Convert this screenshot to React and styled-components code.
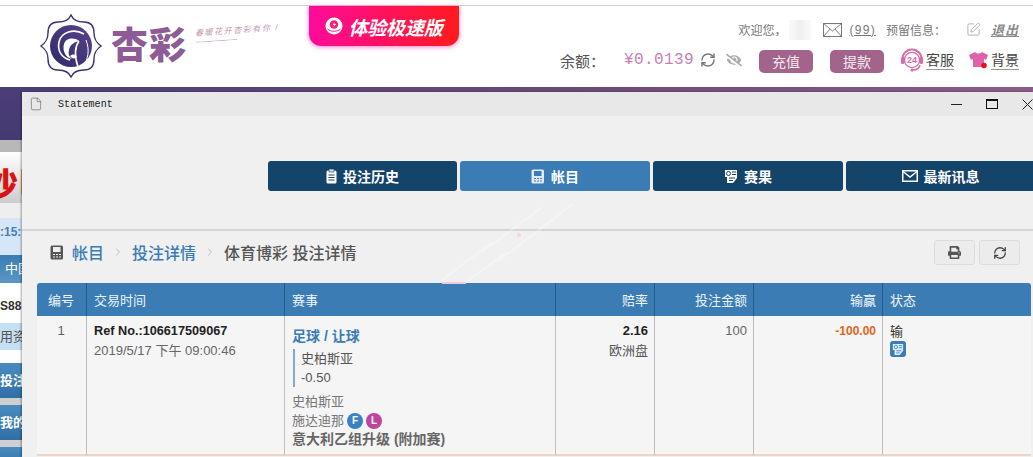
import React from 'react';
import styled, { createGlobalStyle } from 'styled-components';
import { FaPrint, FaEyeSlash } from 'react-icons/fa';
import { RefreshCw, SquarePen, File, ChevronRight } from 'lucide-react';

const GlobalStyle = createGlobalStyle`
  html, body { margin: 0; padding: 0; background: #fff; }
  body { font-family: "Liberation Sans", "Noto Sans CJK SC", sans-serif; }
  * { box-sizing: border-box; }
`;

const Page = styled.div`
  width: 1033px;
  height: 457px;
  overflow: hidden;
  display: flex;
  flex-direction: column;
`;

const TopStrip = styled.div`
  height: 6px;
  flex: none;
  border-bottom: 1px solid #cfcfcf;
`;

const Header = styled.header`
  height: 81px;
  flex: none;
  display: flex;
  align-items: flex-start;
  padding: 0 14px 0 40px;
`;

const Logo = styled.div`
  width: 240px;
  height: 81px;
  display: flex;
  align-items: flex-start;
  flex: none;
`;

const LogoName = styled.span`
  margin: 18px 0 0 9px;
  font-size: 37px;
  line-height: 46px;
  font-weight: 900;
  color: #8d5c96;
  letter-spacing: 1px;
`;

const Tagline = styled.div`
  margin: 19px 0 0 8px;
  width: 84px;
  font-size: 8px;
  line-height: 11px;
  white-space: nowrap;
  color: #c795ae;
  font-style: italic;
  transform: rotate(-4deg);
  letter-spacing: 1.6px;
`;

const TaglineStroke = styled.div`
  width: 42px;
  height: 3px;
  margin-top: 1px;
  border-bottom: 1px solid #cfb3c6;
  border-bottom-left-radius: 30px;
`;

const Promo = styled.div`
  width: 150px;
  height: 40px;
  margin-left: 29px;
  flex: none;
  display: flex;
  align-items: center;
  justify-content: center;
  gap: 5px;
  color: #fff;
  font-size: 19px;
  font-weight: 700;
  border-radius: 0 0 12px 12px;
  background: linear-gradient(90deg, #ff0a9c, #ff1a1e);
  box-shadow: 0 1px 5px rgba(255, 20, 160, 0.55);
  font-style: italic;
  letter-spacing: -0.2px;
`;

const UserPanel = styled.div`
  margin-left: auto;
  display: flex;
  flex-direction: column;
  align-items: flex-end;
`;

const InfoRow = styled.div`
  height: 17px;
  margin-top: 15px;
  display: flex;
  align-items: center;
  font-size: 12px;
  color: #777;
`;

const NameMask = styled.span`
  width: 22px;
  height: 20px;
  margin: 0 12px 0 3px;
  background: linear-gradient(90deg, #fafafa, #eee, #fafafa);
`;

const MsgCount = styled.span`
  margin: 0 10px 0 7px;
  text-decoration: underline;
  letter-spacing: 1.3px;
`;

const Logout = styled.span`
  margin-left: 10px;
  font-weight: 700;
  font-style: italic;
  text-decoration: underline;
  color: #8a8a8a;
  letter-spacing: 1px;
  font-size: 13px;
`;

const BalanceRow = styled.div`
  height: 24px;
  margin-top: 10px;
  display: flex;
  align-items: center;
`;

const BalanceLabel = styled.span`
  font-size: 15px;
  color: #555;
  margin-right: 19px;
`;

const BalanceValue = styled.span`
  font-family: "Liberation Mono", monospace;
  font-size: 16px;
  color: #c77fb5;
  letter-spacing: 0.4px;
  margin-right: 6px;
`;

const FundButton = styled.button`
  width: 54px;
  height: 23px;
  padding: 0;
  border: 0;
  border-radius: 5px;
  background: #a3648c;
  color: #f4e8f0;
  font: 14px "Liberation Sans", "Noto Sans CJK SC", sans-serif;
  margin: 2px 0 0 ${(p) => p.$gap}px;
`;

const ToolLink = styled.span`
  display: inline-flex;
  align-items: center;
  margin-left: ${(p) => p.$gap}px;
  gap: 2px;
`;

const ToolLabel = styled.span`
  font-size: 14px;
  color: #444;
  line-height: 18px;
  border-bottom: 1px solid #999;
`;

const NavBar = styled.div`
  height: 5px;
  flex: none;
  background: linear-gradient(90deg, #4a3d78, #6a4a78 55%, #8c5c86);
`;

const Main = styled.div`
  flex: 1;
  display: flex;
  min-height: 0;
`;

const Sidebar = styled.aside`
  width: 22px;
  flex: none;
  overflow: hidden;
  display: flex;
  flex-direction: column;
`;

const SideRow = styled.div`
  height: ${(p) => p.$h}px;
  flex: none;
  background: ${(p) => p.$bg};
  color: ${(p) => p.$color || '#fff'};
  font-size: ${(p) => p.$size || 13}px;
  font-weight: ${(p) => (p.$bold ? 700 : 400)};
  line-height: ${(p) => p.$line || p.$h}px;
  padding-left: ${(p) => p.$pad || 0}px;
  white-space: nowrap;
  overflow: hidden;
`;

const RedTitle = styled.span`
  display: inline-block;
  margin-left: -15px;
  font-size: 33px;
  font-weight: 900;
  color: #d81410;
  line-height: 66px;
`;

const Window = styled.section`
  position: relative;
  width: 1011px;
  flex: none;
  overflow: hidden;
  background: #f0f0f0;
  box-shadow: -1px 0 2px rgba(0, 0, 0, 0.35);
`;

const TitleBar = styled.div`
  height: 24px;
  display: flex;
  align-items: center;
  padding-left: 7px;
  background: #e8e8e8;
  color: #222;
`;

const TitleText = styled.span`
  margin-left: 15px;
  font-family: "Liberation Mono", monospace;
  font-size: 10px;
  letter-spacing: 0.1px;
`;

const WinControls = styled.div`
  margin-left: auto;
  display: flex;
  align-items: center;
  gap: 24px;
`;

const MinIcon = styled.span`
  width: 11px;
  height: 1px;
  background: #222;
`;

const MaxIcon = styled.span`
  width: 12px;
  height: 10px;
  border: 1px solid #111;
  border-top-width: 2px;
`;

const TabArea = styled.div`
  height: 115px;
  padding: 45px 0 0 246px;
  display: flex;
  align-items: flex-start;
  gap: 3px;
  border-bottom: 2px solid #d4d4d4;
`;

const Tab = styled.div`
  width: ${(p) => p.$w}px;
  height: 30px;
  flex: none;
  display: flex;
  align-items: center;
  justify-content: center;
  gap: 6px;
  border-radius: 3px;
  background: ${(p) => (p.$active ? '#3a7cb3' : '#15446b')};
  color: #fff;
  font-size: 14px;
  font-weight: 700;
`;

const Toolbar = styled.div`
  height: 52px;
  display: flex;
  align-items: center;
  padding: 0 13px 10px 28px;
`;

const CrumbLink = styled.span`
  font-size: 16px;
  font-weight: 500;
  color: #3a7cb3;
  margin-left: ${(p) => p.$gap || 0}px;
`;

const CrumbCurrent = styled.span`
  font-size: 16px;
  font-weight: 500;
  color: #555;
`;

const CrumbArrow = styled(ChevronRight)`
  margin: 0 8px;
  color: #aaa;
`;

const ToolButtons = styled.div`
  margin-left: auto;
  margin-top: 1px;
  display: flex;
  gap: 4px;
`;

const IconButton = styled.button`
  width: 41px;
  height: 25px;
  padding: 0;
  display: flex;
  align-items: center;
  justify-content: center;
  background: #ececec;
  border: 1px solid #dcdcdc;
  border-radius: 3px;
  color: #444;
`;

const Table = styled.table`
  margin-left: 15px;
  width: 994px;
  table-layout: fixed;
  border-collapse: separate;
  border-spacing: 0;
  font-size: 13px;
  color: #666;
`;

const Th = styled.th`
  height: 33px;
  padding: 0 ${(p) => (p.$align === 'right' ? 6 : 8)}px 0 ${(p) => (p.$align === 'right' ? 0 : 7)}px;
  background: #3a7cb3;
  color: #eef5fb;
  font-size: 13px;
  font-weight: 400;
  text-align: ${(p) => p.$align || 'left'};
  border-right: 1px solid #1f5c8c;
  &:first-child { border-top-left-radius: 3px; }
  &:last-child { border-top-right-radius: 3px; border-right: 0; }
`;

const Td = styled.td`
  height: 140px;
  vertical-align: top;
  padding: 6px ${(p) => (p.$align === 'right' ? 6 : 8)}px 0 ${(p) => (p.$align === 'right' ? 0 : 7)}px;
  line-height: 18px;
  background: #f5f5f5;
  text-align: ${(p) => p.$align || 'left'};
  border-right: 1px solid #bdbdbd;
  border-bottom: 2px solid #f0d6c2;
  &:last-child { border-right: 0; }
`;

const MatchCell = styled(Td)`
  padding-top: 11px;
`;

const RefNo = styled.div`
  font-size: 12.7px;
  font-weight: 700;
  color: #222;
`;

const DateLine = styled.div`
  margin-top: 2px;
  color: #666;
`;

const SportLine = styled.div`
  font-size: 14px;
  font-weight: 700;
  color: #3a7cb3;
`;

const BetBlock = styled.div`
  margin: 4px 0 5px 1px;
  padding-left: 6px;
  border-left: 2px solid #86a9c9;
  line-height: 19px;
  color: #555;
`;

const TeamLine = styled.div`
  display: flex;
  align-items: center;
  gap: 3px;
  line-height: 19px;
  color: #777;
`;

const Badge = styled.span`
  width: 16px;
  height: 16px;
  border-radius: 50%;
  display: inline-flex;
  align-items: center;
  justify-content: center;
  background: ${(p) => p.$bg};
  color: #fff;
  font-size: 10px;
  font-weight: 700;
`;

const LeagueLine = styled.div`
  font-size: 14px;
  line-height: 19px;
  font-weight: 700;
  color: #666;
`;

const OddsValue = styled.div`
  font-weight: 700;
  color: #222;
`;

const OddsType = styled.div`
  margin-top: 2px;
  color: #555;
`;

const Loss = styled.span`
  font-size: 12px;
  font-weight: 700;
  color: #e0661a;
`;

const StatusText = styled.div`
  color: #333;
  margin-top: 1px;
`;

const ResultButton = styled.span`
  width: 16px;
  height: 16px;
  display: flex;
  align-items: center;
  justify-content: center;
  border-radius: 3px;
  background: #3a7cb3;
`;

const Watermark = styled.svg`
  position: absolute;
  left: 400px;
  top: 100px;
  pointer-events: none;
`;

const Emblem = () => (
  <svg width="62" height="64" viewBox="0 0 62 64" style={{ marginTop: 8, flex: 'none' }}>
    <defs>
      <linearGradient id="emb" x1="0" y1="1" x2="1" y2="0">
        <stop offset="0" stopColor="#2c2a6b" />
        <stop offset="1" stopColor="#5c4289" />
      </linearGradient>
    </defs>
    <path
      d="M31 1 C33 6 38 8 44 8 C51 8 54 12 54 19 C54 26 57 29 61 32 C57 35 54 38 54 45 C54 52 51 56 44 56 C38 56 33 58 31 63 C29 58 24 56 18 56 C11 56 8 52 8 45 C8 38 5 35 1 32 C5 29 8 26 8 19 C8 12 11 8 18 8 C24 8 29 6 31 1 Z"
      fill="#fff"
      stroke="#3d3270"
      strokeWidth="1.4"
    />
    <circle cx="31" cy="32" r="21" fill="url(#emb)" />
    <path d="M44 20 C34 14 21 18 19 28 C17 37 22 44 30 46" fill="none" stroke="#fff" strokeWidth="1.6" />
    <path d="M24 30 C26 24 34 23 39 27 C35 28 30 30 29 36 C28 40 29 43 32 45 C26 44 22 37 24 30 Z" fill="#fff" />
    <path d="M39 27 C34 34 35 44 38 53" fill="none" stroke="#fff" strokeWidth="1.6" />
    <path d="M46 26 C50 36 48 46 43 52" fill="none" stroke="#fff" strokeWidth="1" />
    <path d="M30 42 C33 40 35 40 37 43 C35 45 32 45 30 42 Z" fill="#fff" />
  </svg>
);

const SpeedBall = () => (
  <svg width="18" height="18" viewBox="0 0 18 18">
    <circle cx="9" cy="9" r="8.5" fill="#fff" />
    <circle cx="9" cy="7.5" r="4.2" fill="#ff1a7c" />
    <path d="M10 4.8 L7.6 8 H9.4 L8.4 10.4 L11 7 H9.2 Z" fill="#fff" />
    <path d="M2.5 12 C6 15 12 15 15.5 12" fill="none" stroke="#ff1a7c" strokeWidth="1" />
  </svg>
);

const Envelope = () => (
  <svg width="19" height="14" viewBox="0 0 19 14">
    <rect x="0.5" y="0.5" width="18" height="13" fill="none" stroke="#777" strokeWidth="1" />
    <path d="M0.5 0.5 L9.5 8 L18.5 0.5 M0.5 13.5 L7 6 M18.5 13.5 L12 6" fill="none" stroke="#777" strokeWidth="0.9" />
  </svg>
);

const Headset = () => (
  <svg width="24" height="26" viewBox="0 0 24 26">
    <path d="M3 15 A9.5 9.5 0 1 1 21 15" fill="none" stroke="#d86aa8" strokeWidth="2" />
    <circle cx="12" cy="13" r="7.6" fill="#fff" stroke="#d86aa8" strokeWidth="1.4" />
    <rect x="1" y="10" width="3.4" height="7" rx="1.6" fill="#d86aa8" />
    <rect x="19.6" y="10" width="3.4" height="7" rx="1.6" fill="#d86aa8" />
    <path d="M20 18 C19 22 16 23 13 23" fill="none" stroke="#d86aa8" strokeWidth="1.4" />
    <circle cx="12" cy="23" r="1.6" fill="#d86aa8" />
    <text x="12" y="16.4" textAnchor="middle" fontSize="9" fontWeight="700" fontFamily="Liberation Sans" fill="#d86aa8">24</text>
  </svg>
);

const Shirt = () => (
  <svg width="20" height="20" viewBox="0 0 20 20">
    <path d="M6 2 C8 4 11 4 13 2 L19 5 L17 10 L15 9 L15 17 L4 17 L4 9 L2 10 L0 5 Z" fill="#e062ab" />
    <circle cx="15" cy="15.5" r="2.8" fill="#e8101a" />
  </svg>
);

const ClipIcon = ({ color = '#fff' }) => (
  <svg width="11" height="15" viewBox="0 0 11 15">
    <rect x="0.5" y="1.5" width="10" height="13" rx="1.5" fill={color} />
    <rect x="3" y="0" width="5" height="3" fill="#cfd9e2" stroke="#15446b" strokeWidth="0.6" />
    <path d="M2.5 6 H8.5 M2.5 8.5 H8.5 M2.5 11 H8.5" stroke="#15446b" strokeWidth="1" />
  </svg>
);

const LedgerIcon = ({ dark }) => (
  <svg width="14" height="15" viewBox="0 0 14 15">
    <rect x="0.5" y="0.5" width="12.5" height="14" rx="1.5" fill={dark ? '#555' : '#dfeaf4'} />
    <rect x="3" y="2" width="7.5" height="5" fill={dark ? '#eee' : '#3a7cb3'} />
    <path d="M3 9.5 H5 M6 9.5 H8 M9 9.5 H11 M3 12 H5 M6 12 H8 M9 12 H11" stroke={dark ? '#eee' : '#3a7cb3'} strokeWidth="1.2" />
  </svg>
);

const ResultIcon = ({ stroke = '#15446b', fill = '#fff', size = 14 }) => (
  <svg width={size} height={size + 1} viewBox="0 0 14 15">
    <path d="M1 1 H13 V9 L9 14 H3 V8 H1 Z" fill={fill} />
    <circle cx="4.5" cy="4.5" r="2" fill="none" stroke={stroke} strokeWidth="1" />
    <path d="M8 3 H12 M8 5.5 H12 M5 9 H11 M5 11.5 H9" stroke={stroke} strokeWidth="1" />
  </svg>
);

const columns = [50, 198, 271, 99, 99, 129, 148];

export default function App() {
  return (
    <Page>
      <GlobalStyle />
      <TopStrip />
      <Header>
        <Logo>
          <Emblem />
          <LogoName>杏彩</LogoName>
          <Tagline>
            春暖花开杏彩有你 /
            <TaglineStroke />
          </Tagline>
        </Logo>
        <Promo>
          <SpeedBall />
          体验极速版
        </Promo>
        <UserPanel>
          <InfoRow>
            欢迎您，
            <NameMask />
            <Envelope />
            <MsgCount>(99)</MsgCount>
            预留信息：
            <SquarePen size={15} strokeWidth={1.4} color="#aaa" style={{ marginLeft: 20 }} />
            <Logout>退出</Logout>
          </InfoRow>
          <BalanceRow>
            <BalanceLabel>余额：</BalanceLabel>
            <BalanceValue>¥0.0139</BalanceValue>
            <RefreshCw size={16} strokeWidth={2.2} color="#777" />
            <FaEyeSlash size={16} color="#aaa" style={{ marginLeft: 10 }} />
            <FundButton $gap={17}>充值</FundButton>
            <FundButton $gap={17}>提款</FundButton>
            <ToolLink $gap={16}>
              <Headset />
              <ToolLabel>客服</ToolLabel>
            </ToolLink>
            <ToolLink $gap={15}>
              <Shirt />
              <ToolLabel>背景</ToolLabel>
            </ToolLink>
          </BalanceRow>
        </UserPanel>
      </Header>
      <NavBar />
      <Main>
        <Sidebar>
          <SideRow $h={48} $bg="linear-gradient(180deg, #4a3d78, #443a70)" />
          <SideRow $h={12} $bg="#b8b8b8" />
          <SideRow $h={51} $bg="linear-gradient(180deg, #fff, #ccc)">
            <RedTitle>沙巴</RedTitle>
          </SideRow>
          <SideRow $h={15} $bg="#eeeeee" />
          <SideRow $h={37} $bg="#d6e6f8" $color="#4a7fb0" $bold $size={12} $line={29}>:15:</SideRow>
          <SideRow $h={28} $bg="linear-gradient(180deg, #3a7cb3, #5b97c6)" $pad={5}>中国</SideRow>
          <SideRow $h={40} $bg="#fff" $color="#333" $bold $size={12} $line={46}>S88</SideRow>
          <SideRow $h={27} $bg="#c5dff3" $color="#555" $size={13}>用资</SideRow>
          <SideRow $h={13} $bg="#fff" />
          <SideRow $h={35} $bg="linear-gradient(180deg, #4a8cc0, #2f6fa5)" $bold>投注</SideRow>
          <SideRow $h={7} $bg="#cfcfcf" />
          <SideRow $h={35} $bg="linear-gradient(180deg, #4a8cc0, #2f6fa5)" $bold>我的</SideRow>
          <SideRow $h={7} $bg="#cfcfcf" />
          <SideRow $h={20} $bg="linear-gradient(180deg, #4a8cc0, #2f6fa5)" />
        </Sidebar>
        <Window>
          <TitleBar>
            <File size={14} strokeWidth={1} color="#555" />
            <TitleText>Statement</TitleText>
            <WinControls>
              <MinIcon />
              <MaxIcon />
              <svg width="11" height="11" viewBox="0 0 11 11">
                <path d="M0.5 0.5 L10.5 10.5 M10.5 0.5 L0.5 10.5" stroke="#222" strokeWidth="1" />
              </svg>
            </WinControls>
          </TitleBar>
          <TabArea>
            <Tab $w={189}><ClipIcon />投注历史</Tab>
            <Tab $w={190} $active><LedgerIcon />帐目</Tab>
            <Tab $w={190}><ResultIcon />赛果</Tab>
            <Tab $w={189}>
              <svg width="16" height="12" viewBox="0 0 16 12">
                <rect x="0.75" y="0.75" width="14.5" height="10.5" fill="none" stroke="#fff" strokeWidth="1.5" />
                <path d="M1 1.5 L8 7 L15 1.5" fill="none" stroke="#fff" strokeWidth="1.4" />
              </svg>
              最新讯息
            </Tab>
          </TabArea>
          <Toolbar>
            <LedgerIcon dark />
            <CrumbLink $gap={8}>帐目</CrumbLink>
            <CrumbArrow size={12} strokeWidth={1.5} />
            <CrumbLink>投注详情</CrumbLink>
            <CrumbArrow size={12} strokeWidth={1.5} />
            <CrumbCurrent>体育博彩 投注详情</CrumbCurrent>
            <ToolButtons>
              <IconButton><FaPrint size={13} color="#555" /></IconButton>
              <IconButton><RefreshCw size={14} strokeWidth={2.2} color="#444" /></IconButton>
            </ToolButtons>
          </Toolbar>
          <Table>
            <colgroup>
              {columns.map((w, i) => (
                <col key={i} style={{ width: w }} />
              ))}
            </colgroup>
            <thead>
              <tr>
                <Th $align="center">编号</Th>
                <Th>交易时间</Th>
                <Th>赛事</Th>
                <Th $align="right">赔率</Th>
                <Th $align="right">投注金额</Th>
                <Th $align="right">输赢</Th>
                <Th>状态</Th>
              </tr>
            </thead>
            <tbody>
              <tr>
                <Td $align="center">1</Td>
                <Td>
                  <RefNo>Ref No.:106617509067</RefNo>
                  <DateLine>2019/5/17 下午 09:00:46</DateLine>
                </Td>
                <MatchCell>
                  <SportLine>足球 / 让球</SportLine>
                  <BetBlock>
                    史柏斯亚
                    <br />
                    -0.50
                  </BetBlock>
                  <TeamLine>史柏斯亚</TeamLine>
                  <TeamLine>
                    施达迪那
                    <Badge $bg="#3a82c4">F</Badge>
                    <Badge $bg="#c0449c">L</Badge>
                  </TeamLine>
                  <LeagueLine>意大利乙组升级 (附加赛)</LeagueLine>
                </MatchCell>
                <Td $align="right">
                  <OddsValue>2.16</OddsValue>
                  <OddsType>欧洲盘</OddsType>
                </Td>
                <Td $align="right">100</Td>
                <Td $align="right"><Loss>-100.00</Loss></Td>
                <Td>
                  <StatusText>输</StatusText>
                  <ResultButton><ResultIcon stroke="#3a7cb3" fill="#dff0fb" size={12} /></ResultButton>
                </Td>
              </tr>
            </tbody>
          </Table>
          <Watermark width="190" height="110" viewBox="0 0 190 110">
            <g stroke="#fff" strokeWidth="2" opacity="0.3" fill="none">
              <path d="M20 88 L70 50 M47 88 L85 60 M60 60 L120 15 M75 70 L135 25 M95 55 L150 12" />
            </g>
            <circle cx="97" cy="43" r="2" fill="#f7d4da" />
            <rect x="20" y="90" width="24" height="2" fill="#eecdd6" />
          </Watermark>
        </Window>
      </Main>
    </Page>
  );
}
